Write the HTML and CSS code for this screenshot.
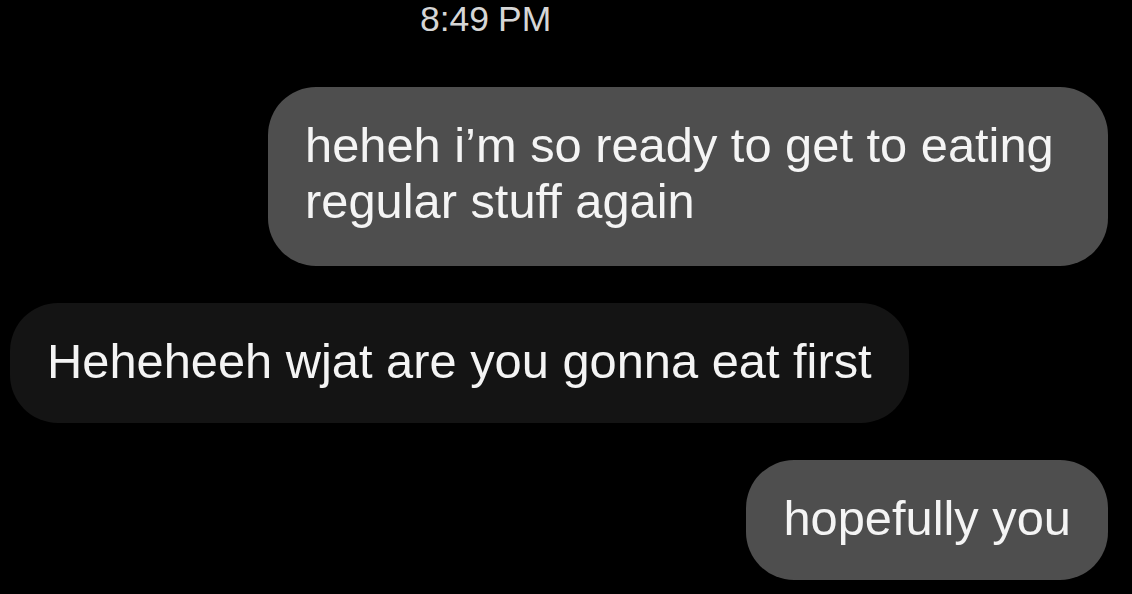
FILE: index.html
```html
<!DOCTYPE html>
<html lang="en">
<head>
<meta charset="utf-8">
<title>Messages</title>
<link rel="stylesheet" href="styles.css">
</head>
<body>
<main class="thread">
  <div class="timestamp">8:49 PM</div>
  <div class="row row-sent">
    <div class="bubble sent wide">heheh i’m so ready to get to eating regular stuff again</div>
  </div>
  <div class="row row-received">
    <div class="bubble received">Heheheeh wjat are you gonna eat first</div>
  </div>
  <div class="row row-sent">
    <div class="bubble sent">hopefully you</div>
  </div>
</main>
</body>
</html>
```

FILE: styles.css
```css
html, body {
  margin: 0;
  padding: 0;
  background: #000;
  height: 100%;
  overflow: hidden;
}

body {
  font-family: "Liberation Sans", Arial, sans-serif;
  color: #f4f4f4;
}

.thread {
  display: flex;
  flex-direction: column;
  padding: 0 24px 0 10px;
}

.timestamp {
  font-size: 35.5px;
  line-height: 38px;
  color: #d6d6d6;
  padding-left: 410px;
  margin-bottom: 49px;
  word-spacing: -1px;
}

.row {
  display: flex;
}

.row + .row {
  margin-top: 37px;
}

.row-sent {
  justify-content: flex-end;
}

.row-received {
  justify-content: flex-start;
}

.bubble {
  font-size: 48.8px;
  line-height: 56px;
  padding: 30px 37px 34px 37px;
  border-radius: 48px;
  max-width: 930px;
  box-sizing: border-box;
}

.bubble.wide {
  max-width: 840px;
  padding-bottom: 37px;
}

.sent {
  background: #4e4e4e;
}

.received {
  background: #141414;
}
```
